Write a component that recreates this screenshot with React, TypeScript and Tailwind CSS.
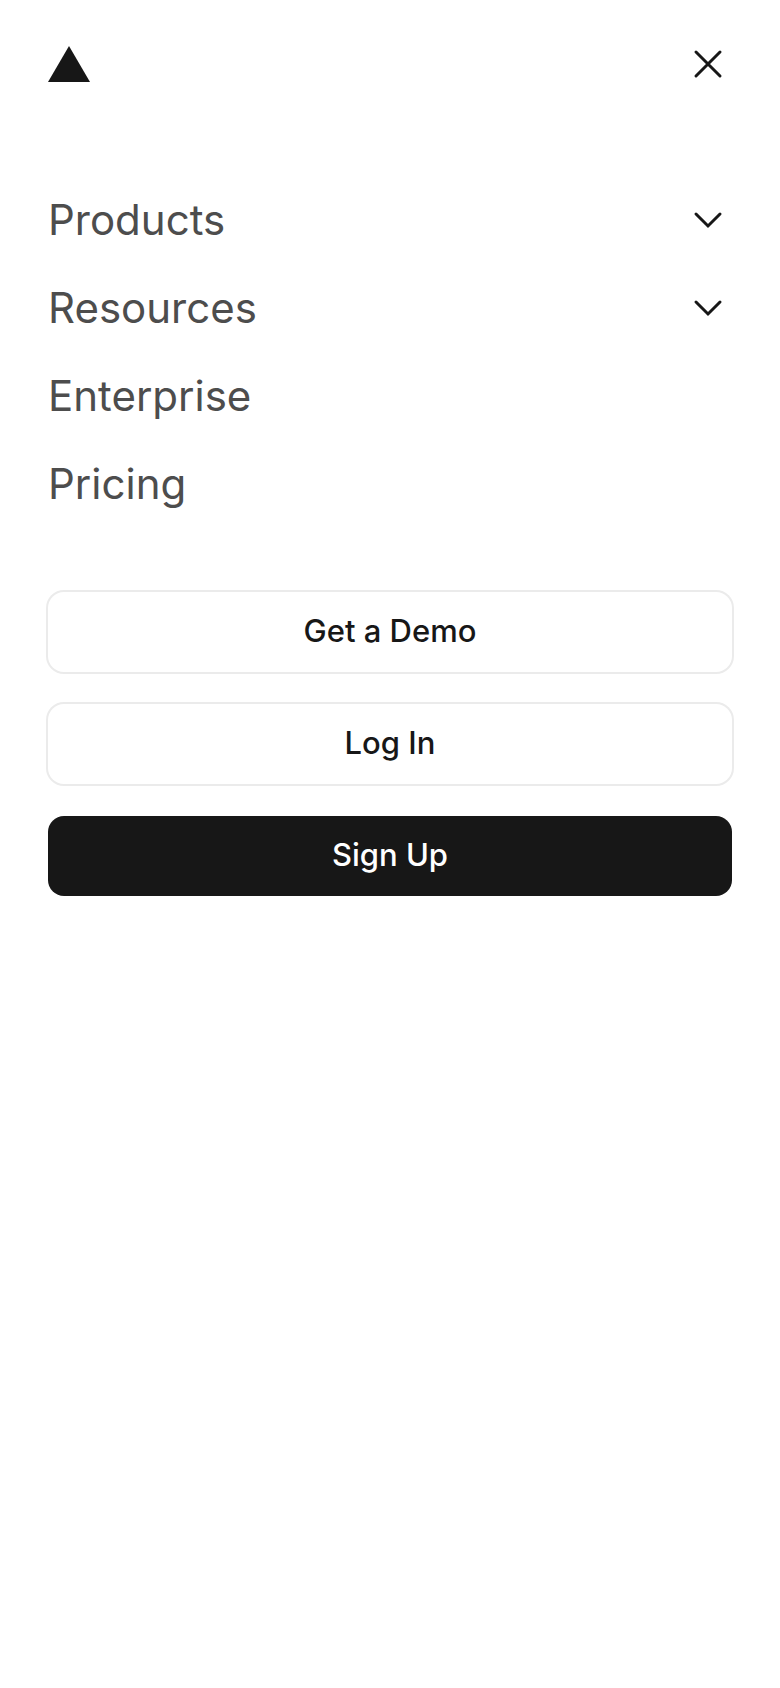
import React, { useState } from "react";
import clsx from "clsx";

type NavItem = {
  label: string;
  expandable?: boolean;
};

const navItems: NavItem[] = [
  { label: "Products", expandable: true },
  { label: "Resources", expandable: true },
  { label: "Enterprise" },
  { label: "Pricing" },
];

const actions = [
  { label: "Get a Demo", primary: false },
  { label: "Log In", primary: false },
  { label: "Sign Up", primary: true },
];

function Logo() {
  return (
    <svg className="h-9 w-[42px]" viewBox="0 0 42 36" fill="currentColor" aria-hidden="true">
      <path d="M21 0L42 36H0Z" />
    </svg>
  );
}

function CloseIcon() {
  return (
    <svg className="size-8" viewBox="0 0 32 32" fill="none" stroke="currentColor" strokeWidth="3" strokeLinecap="round" aria-hidden="true">
      <path d="M4 4L28 28M28 4L4 28" />
    </svg>
  );
}

function ChevronIcon({ open }: { open: boolean }) {
  return (
    <svg
      className={clsx("size-8 text-[#171717]", open && "rotate-180")}
      viewBox="0 0 32 32"
      fill="none"
      stroke="currentColor"
      strokeWidth="3"
      strokeLinecap="round"
      aria-hidden="true"
    >
      <path d="M4 10L16 22L28 10" />
    </svg>
  );
}

export default function App() {
  const [openItem, setOpenItem] = useState<string | null>(null);

  const rowClass = "flex h-22 w-full items-center justify-between pr-2 text-left";

  return (
    <div className="min-h-screen bg-white px-12 font-['Inter',sans-serif] text-[#171717]">
      {/* Top bar */}
      <header className="flex h-32 items-center justify-between pr-2">
        <a href="#" aria-label="Home">
          <Logo />
        </a>
        <button type="button" aria-label="Close menu">
          <CloseIcon />
        </button>
      </header>

      {/* Menu links */}
      <nav className="mt-12 text-[42px] leading-none text-[#4d4d4d]">
        <ul>
          {navItems.map((item) => (
            <li key={item.label}>
              {item.expandable ? (
                <button
                  type="button"
                  className={rowClass}
                  aria-expanded={openItem === item.label}
                  onClick={() => setOpenItem(openItem === item.label ? null : item.label)}
                >
                  {item.label}
                  <ChevronIcon open={openItem === item.label} />
                </button>
              ) : (
                <a href="#" className={rowClass}>
                  {item.label}
                </a>
              )}
            </li>
          ))}
        </ul>
      </nav>

      {/* Account actions */}
      <div className="mt-16 flex flex-col gap-8">
        {actions.map((action) => (
          <a
            key={action.label}
            href="#"
            className={clsx(
              "flex h-20 items-center justify-center rounded-2xl pb-1 text-[31px] leading-none font-medium",
              action.primary ? "bg-[#171717] text-white" : "bg-white ring-2 ring-[#ebebeb]"
            )}
          >
            {action.label}
          </a>
        ))}
      </div>
    </div>
  );
}
